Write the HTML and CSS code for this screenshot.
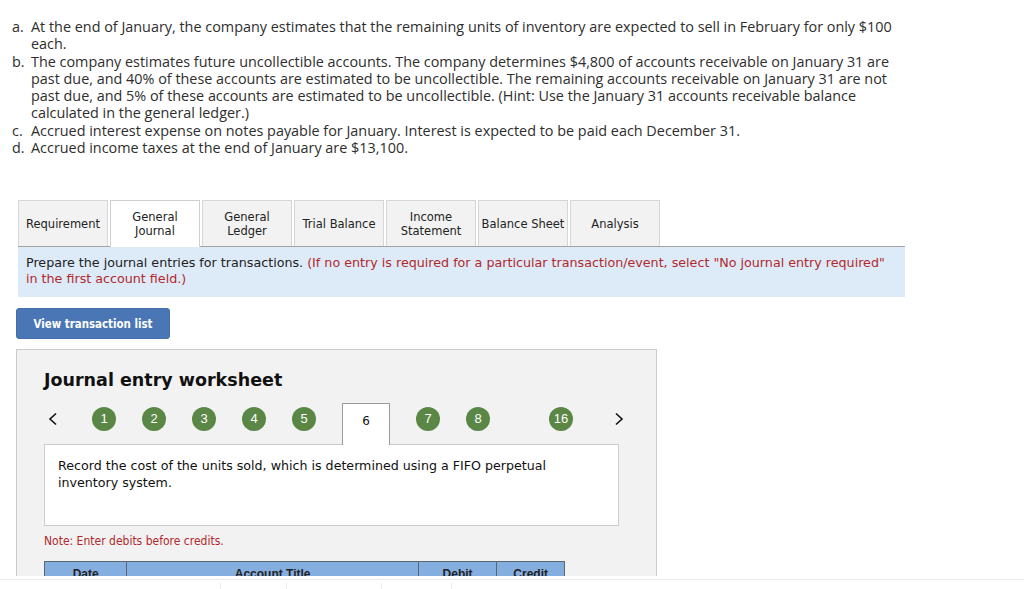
FILE: index.html
```html
<!DOCTYPE html>
<html>
<head>
<meta charset="utf-8">
<link rel="stylesheet" href="styles.css">
</head>
<body>
<div class="wrap">
  <ul class="problems">
    <li><span class="mk">a.</span><span>At the end of January, the company estimates that the remaining units of inventory are expected to sell in February for only $100<br>each.</span></li>
    <li><span class="mk">b.</span><span>The company estimates future uncollectible accounts. The company determines $4,800 of accounts receivable on January 31 are<br>past due, and 40% of these accounts are estimated to be uncollectible. The remaining accounts receivable on January 31 are not<br>past due, and 5% of these accounts are estimated to be uncollectible. (Hint: Use the January 31 accounts receivable balance<br>calculated in the general ledger.)</span></li>
    <li><span class="mk">c.</span><span>Accrued interest expense on notes payable for January. Interest is expected to be paid each December 31.</span></li>
    <li><span class="mk">d.</span><span>Accrued income taxes at the end of January are $13,100.</span></li>
  </ul>

  <div class="tabs">
    <div class="tab">Requirement</div>
    <div class="tab active">General<br>Journal</div>
    <div class="tab">General<br>Ledger</div>
    <div class="tab">Trial Balance</div>
    <div class="tab">Income<br>Statement</div>
    <div class="tab">Balance Sheet</div>
    <div class="tab">Analysis</div>
  </div>
  <div class="instr">Prepare the journal entries for transactions. <span class="red">(If no entry is required for a particular transaction/event, select "No journal entry required"<br>in the first account field.)</span></div>

  <button class="btn">View transaction list</button>

  <div class="panel">
    <h2 class="title">Journal entry worksheet</h2>
    <div class="nav">
      <div class="arrow"><svg width="10" height="14" viewBox="0 0 10 14"><polyline points="8,1.5 2,7 8,12.5" fill="none" stroke="#111" stroke-width="1.6"/></svg></div>
      <div class="slot"><span class="dot">1</span></div>
      <div class="slot"><span class="dot">2</span></div>
      <div class="slot"><span class="dot">3</span></div>
      <div class="slot"><span class="dot">4</span></div>
      <div class="slot"><span class="dot">5</span></div>
      <div class="cur">6</div>
      <div class="slot"><span class="dot">7</span></div>
      <div class="slot"><span class="dot">8</span></div>
      <div class="slot gap"><span class="dot">16</span></div>
      <div class="arrow right"><svg width="10" height="14" viewBox="0 0 10 14"><polyline points="2,1.5 8,7 2,12.5" fill="none" stroke="#111" stroke-width="1.6"/></svg></div>
    </div>
    <div class="desc"><p>Record the cost of the units sold, which is determined using a FIFO perpetual<br>inventory system.</p></div>
    <p class="note">Note: Enter debits before credits.</p>
    <table class="jt">
      <tr><th class="c1">Date</th><th class="c2">Account Title</th><th class="c3">Debit</th><th class="c4">Credit</th></tr>
    </table>
  </div>
</div>
<div class="foot">
  <span class="tick t1"></span><span class="tick t2"></span><span class="tick t3"></span><span class="tick t4"></span>
</div>
</body>
</html>
```

FILE: styles.css
```css
html, body { margin: 0; padding: 0; background: #fff; }
.wrap { height: 576px; overflow: hidden; }

.problems {
  list-style: none;
  margin: 0;
  padding: 18px 0 0 12px;
  font-family: "Open Sans", Lato, "Liberation Sans", sans-serif;
  font-size: 14.4px;
  line-height: 17.3px;
  color: #2e2e2e;
}
.problems li { display: flex; white-space: nowrap; }
.problems .mk { width: 19px; flex: none; }

.tabs {
  display: flex;
  gap: 2px;
  margin: 44px 0 0 18px;
  height: 46px;
}
.tab {
  box-sizing: border-box;
  width: 90px;
  height: 46px;
  border: 1px solid #d6d6d6;
  border-bottom: none;
  background: #f2f2f2;
  display: flex;
  align-items: center;
  justify-content: center;
  text-align: center;
  font-family: "DejaVu Sans", Verdana, sans-serif;
  font-size: 11.5px;
  line-height: 14px;
  color: #222;
}
.tab.active {
  background: #fff;
  border-color: #cfcfcf;
  height: 47px;
  margin-bottom: -1px;
  position: relative;
  z-index: 1;
}

.instr {
  box-sizing: border-box;
  margin-left: 18px;
  width: 887px;
  height: 51px;
  border-top: 1px solid #a3a3a3;
  background: #ddebf8;
  padding: 8px 8px 0 8px;
  font-family: "DejaVu Sans", Verdana, sans-serif;
  font-size: 12.7px;
  line-height: 16px;
  color: #222;
  white-space: nowrap;
}
.red { color: #b3282b; }

.btn {
  display: block;
  margin: 11px 0 0 16px;
  width: 154px;
  height: 31px;
  border: 1px solid #4570ad;
  border-radius: 3px;
  background: #4a76b6;
  color: #fff;
  font-family: "DejaVu Sans Condensed", "DejaVu Sans", sans-serif;
  font-weight: bold;
  font-size: 11.4px;
  padding: 0;
}

.panel {
  box-sizing: border-box;
  margin: 10px 0 0 16px;
  width: 641px;
  height: 300px;
  background: #f2f2f2;
  border: 1px solid #cccccc;
  padding: 19px 0 0 27px;
}
.title {
  margin: 0;
  font-family: "DejaVu Sans", Verdana, sans-serif;
  font-weight: bold;
  font-size: 17.5px;
  line-height: 22px;
  color: #111;
}

.nav {
  display: flex;
  align-items: flex-start;
  height: 41px;
  margin-top: 12px;
}
.arrow {
  width: 35px;
  flex: none;
  padding-top: 9px;
  padding-left: 4px;
  box-sizing: border-box;
}
.arrow.right { width: auto; padding-left: 28px; }
.slot {
  width: 50px;
  flex: none;
  display: flex;
  justify-content: center;
  padding-top: 4px;
}
.slot.gap { margin-left: 33px; }
.dot {
  width: 24px;
  height: 24px;
  border-radius: 50%;
  background: #5a8746;
  color: #fff;
  font-family: "Liberation Sans", Arial, sans-serif;
  font-size: 13px;
  line-height: 24px;
  text-align: center;
}
.cur {
  box-sizing: border-box;
  flex: none;
  width: 48px;
  height: 42px;
  margin: 0 13px -1px;
  background: #fff;
  border: 1px solid #9a9a9a;
  border-bottom: none;
  text-align: center;
  padding-top: 10px;
  font-family: "DejaVu Sans", Verdana, sans-serif;
  font-size: 12px;
  line-height: 14px;
  color: #111;
  position: relative;
  z-index: 1;
}

.desc {
  box-sizing: border-box;
  width: 575px;
  height: 82px;
  background: #fff;
  border: 1px solid #cccccc;
  padding: 12px 13px 0;
}
.desc p {
  margin: 0;
  font-family: "DejaVu Sans", Verdana, sans-serif;
  font-size: 12.65px;
  line-height: 17px;
  color: #111;
  white-space: nowrap;
}
.note {
  margin: 8px 0 0;
  font-family: "DejaVu Sans Condensed", "DejaVu Sans", sans-serif;
  font-size: 12px;
  line-height: 14px;
  color: #b3282b;
}

.jt {
  margin-top: 13px;
  border-collapse: collapse;
  width: 521px;
}
.jt th {
  background: #85aee0;
  border: 1px solid #5c6670;
  height: 24px;
  padding: 5px 0 0;
  vertical-align: top;
  font-family: "Liberation Sans", Arial, sans-serif;
  font-size: 12px;
  font-weight: bold;
  color: #222;
}
.jt .c1 { width: 82px; }
.jt .c2 { width: 293px; }
.jt .c3 { width: 78px; }
.jt .c4 { width: 67px; }

.foot {
  margin-top: 3px;
  height: 9px;
  border-top: 1px solid #ececec;
  position: relative;
}
.tick {
  position: absolute;
  top: 3px;
  width: 1px;
  height: 6px;
  background: #ececec;
}
.t1 { left: 220px; }
.t2 { left: 286px; }
.t3 { left: 381px; }
.t4 { left: 451px; }
```
